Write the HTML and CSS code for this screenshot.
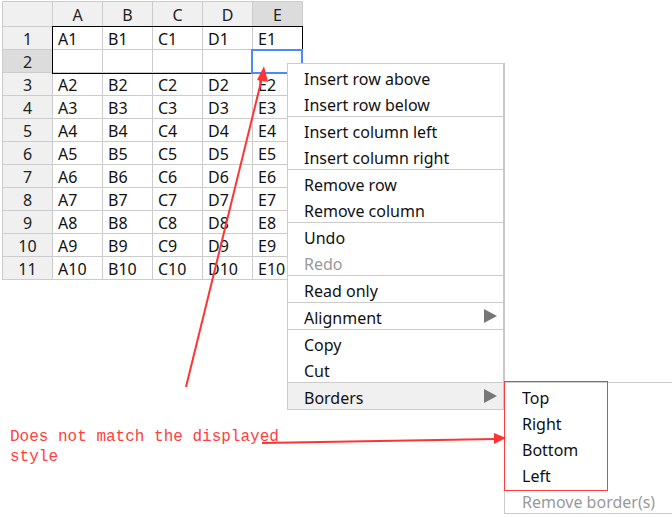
FILE: index.html
```html
<!DOCTYPE html>
<html lang="en">

<head>
    <meta charset="UTF-8">
    <title>Borders menu</title>
    <meta name="viewport" content="width=device-width, initial-scale=1.0">
    <link rel="stylesheet" href="styles.css">
</head>

<body>

    <div id="sheet">
        <div class="grid" id="grid"></div>
        <div class="range-border"></div>
        <div class="current"></div>
    </div>

    <ul class="menu main-menu">
        <li>Insert row above</li>
        <li class="sep">Insert row below</li>
        <li>Insert column left</li>
        <li class="sep">Insert column right</li>
        <li>Remove row</li>
        <li class="sep">Remove column</li>
        <li>Undo</li>
        <li class="sep disabled">Redo</li>
        <li class="sep">Read only</li>
        <li class="sep sub">Alignment</li>
        <li>Copy</li>
        <li class="sep">Cut</li>
        <li class="sub active">Borders</li>
    </ul>

    <ul class="menu sub-menu">
        <li>Top</li>
        <li>Right</li>
        <li>Bottom</li>
        <li>Left</li>
        <li class="disabled">Remove border(s)</li>
    </ul>

    <div class="note-box"></div>

    <p class="note">Does not match the displayed<br>style</p>

    <svg class="arrows" width="672" height="517" viewBox="0 0 672 517">
        <line x1="186" y1="387" x2="262" y2="78" />
        <polygon points="264,66 257,80 268,82" />
        <line x1="262" y1="443" x2="496" y2="439" />
        <polygon points="506,438 494,433 494,444" />
    </svg>

    <script>
        const grid = document.getElementById('grid');
        const cols = ['A', 'B', 'C', 'D', 'E'];

        // header row
        let html = '<div class="hd corner"></div>';
        cols.forEach(c => {
            html += `<div class="hd${c === 'E' ? ' hl' : ''}">${c}</div>`;
        });

        for (let r = 1; r <= 11; r++) {
            html += `<div class="hd rh${r === 2 ? ' hl' : ''}">${r}</div>`;
            cols.forEach(c => {
                let txt = '';
                if (r === 1) txt = c + '1';
                else if (r > 2) txt = c + (r - 1);
                html += `<div class="cell">${txt}</div>`;
            });
        }
        grid.innerHTML = html;
    </script>

</body>

</html>
```

FILE: styles.css
```css
body {
    margin: 0;
    font-family: "Noto Sans", "Open Sans", sans-serif;
    font-size: 16px;
    color: #111;
    background: #fff;
    width: 672px;
    height: 517px;
    overflow: hidden;
    position: relative;
}

#sheet {
    position: relative;
    margin: 1px 0 0 2px;
    width: 301px;
}

.grid {
    display: grid;
    grid-template-columns: 50px repeat(5, 50px);
    grid-template-rows: 25px;
    grid-auto-rows: 23px;
    border-left: 1px solid #ccc;
    border-top: 1px solid #ccc;
}

.grid > div {
    border-right: 1px solid #ccc;
    border-bottom: 1px solid #ccc;
    line-height: 24px;
    white-space: nowrap;
    overflow: hidden;
}

.hd {
    background: #f0f0f0;
    text-align: center;
    color: #222;
}

.grid > .hd:not(.rh) {
    line-height: 26px;
}

.hd.hl {
    background: #dcdcdc;
}

.cell {
    padding-left: 5px;
}

.range-border {
    position: absolute;
    left: 50px;
    top: 25px;
    width: 249px;
    height: 46px;
    border: 1px solid #000;
}

.current {
    position: absolute;
    left: 249px;
    top: 48px;
    width: 48px;
    height: 21px;
    border: 2px solid #4b89ff;
}

.menu {
    position: absolute;
    margin: 0;
    padding: 0;
    list-style: none;
    background: #fff;
    border: 1px solid #ccc;
}

.menu li {
    height: 26px;
    line-height: 30px;
    padding-left: 16px;
    font-size: 16px;
    color: #111;
    white-space: nowrap;
}

.menu li.sep {
    border-bottom: 1px solid #ccc;
}

.menu li.disabled {
    color: #999;
}

.menu li.active {
    background: #f0f0f0;
}

.menu li.sub {
    position: relative;
}

.menu li.sub::after {
    content: "";
    position: absolute;
    right: 6px;
    top: 6px;
    border-left: 13px solid #777;
    border-top: 7px solid transparent;
    border-bottom: 7px solid transparent;
}

.main-menu {
    left: 287px;
    top: 63px;
    width: 215px;
    border-right: 2px solid #c8c8c8;
}

.sub-menu {
    left: 504px;
    top: 382px;
    width: 167px;
    border-right: none;
}

.sub-menu li {
    padding-left: 17px;
}

.note-box {
    position: absolute;
    left: 504px;
    top: 381px;
    width: 102px;
    height: 108px;
    border: 1px solid #ff3b3b;
}

.note {
    position: absolute;
    left: 10px;
    top: 427px;
    margin: 0;
    font-family: "Liberation Mono", monospace;
    font-size: 16px;
    line-height: 20px;
    color: #ff4040;
}

.arrows {
    position: absolute;
    left: 0;
    top: 0;
}

.arrows line {
    stroke: #ff3333;
    stroke-width: 2;
}

.arrows polygon {
    fill: #ff3333;
}
```
